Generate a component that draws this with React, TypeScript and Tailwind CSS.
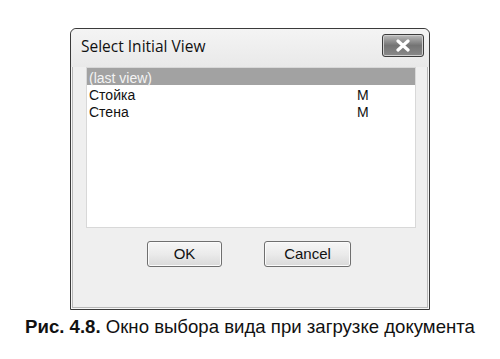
import React from "react";

const rows = [
  { label: "(last view)", mark: "", selected: true },
  { label: "Стойка", mark: "M", selected: false },
  { label: "Стена", mark: "M", selected: false },
];

function CloseIcon() {
  return (
    <svg width="18" height="13" viewBox="0 0 18 13">
      <path d="M4 2 L14 11 M14 2 L4 11" stroke="#ffffff" strokeWidth="3.2" strokeLinecap="round" />
    </svg>
  );
}

function Button({ label, width }: { label: string; width: string }) {
  return (
    <div
      className={`${width} h-[26px] rounded-[3px] border border-[#6f6f6f] bg-gradient-to-b from-[#f6f6f6] via-[#ebebeb] to-[#d9d9d9] shadow-[inset_0_0_0_1px_#fbfbfb] flex items-center justify-center text-[15px] text-[#111]`}
      style={{ fontFamily: '"Liberation Sans", Arial, sans-serif' }}
    >
      {label}
    </div>
  );
}

export default function App() {
  return (
    <div className="w-[500px] h-[359px] bg-white overflow-hidden">
      <div className="ml-[70px] pt-[28px]">
        <div className="w-[360px] h-[282px] border border-[#3a3a3a] rounded-t-[6px] bg-[#efefef] flex flex-col shadow-[inset_0_0_0_1px_#f7f7f7,inset_0_0_0_2px_#b8b8b8]">
          <div className="h-[38px] flex justify-between items-start rounded-t-[6px] bg-gradient-to-b from-[#f4f4f4] to-[#e9e9e9]">
            <div
              className="pl-[10px] pt-[7px] text-[15.5px] leading-[20px] text-[#111]"
              style={{ fontFamily: '"Open Sans", "Noto Sans", sans-serif' }}
            >
              Select Initial View
            </div>
            <div className="mt-[5px] mr-[5px] w-[42px] h-[23px] rounded-[3px] border border-[#3c3c3c] bg-gradient-to-b from-[#bdbdbd] via-[#747474] to-[#8a8a8a] shadow-[inset_0_0_0_1px_#cfcfcf] flex items-center justify-center">
              <CloseIcon />
            </div>
          </div>
          <div className="ml-[15px] mr-[13px] h-[161px] border border-[#d8d8d8] bg-white flex flex-col" style={{ fontFamily: '"Liberation Sans", Arial, sans-serif' }}>
            {rows.map((r) => (
              <div
                key={r.label}
                className={`h-[17px] flex items-start pt-[2px] text-[14px] leading-[16px] ${r.selected ? "bg-[#a2a2a2] text-[#f4f4f4]" : "text-[#111]"}`}
              >
                <span className="pl-[2px] w-[270px]">{r.label}</span>
                <span>{r.mark}</span>
              </div>
            ))}
          </div>
          <div className="flex pl-[76px] pt-[13px] gap-[42px]">
            <Button label="OK" width="w-[75px]" />
            <Button label="Cancel" width="w-[87px]" />
          </div>
        </div>
      </div>
      <div
        className="mt-[6px] text-center text-[18.6px] leading-[22px] text-[#111]"
        style={{ fontFamily: '"Liberation Sans", Arial, sans-serif' }}
      >
        <span className="font-bold">Рис. 4.8.</span> Окно выбора вида при загрузке документа
      </div>
    </div>
  );
}
